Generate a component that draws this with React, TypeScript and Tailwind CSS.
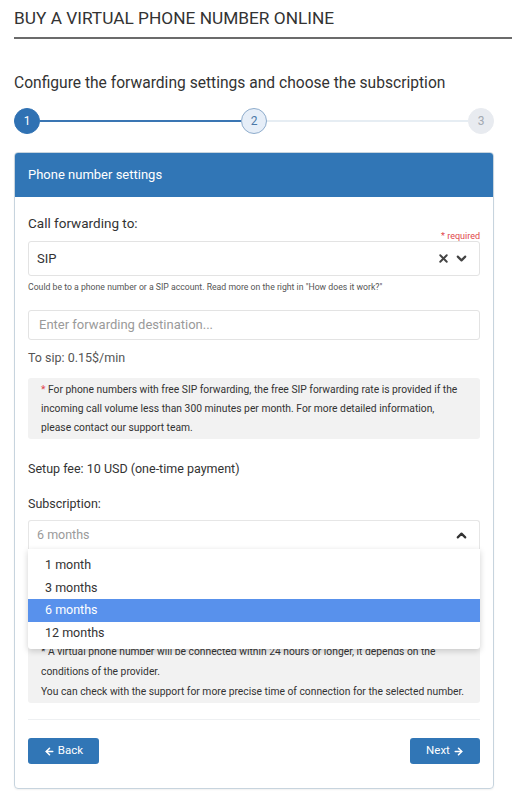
import { ChevronDown, ChevronUp, X, ArrowLeft, ArrowRight } from "lucide-react";

const options = ["1 month", "3 months", "6 months", "12 months"];

function Step({ n, state }: { n: number; state: "done" | "active" | "todo" }) {
  const cls =
    state === "done"
      ? "bg-[#2f71b3] text-white border-[#2f71b3]"
      : state === "active"
      ? "bg-[#e6eef8] text-[#4b78a8] border-[#8eaccc]"
      : "bg-[#e8ebf0] text-[#a3a9b2] border-[#e8ebf0]";
  return (
    <span className={`flex h-[26px] w-[26px] shrink-0 items-center justify-center rounded-full border text-[12px] ${cls}`}>
      {n}
    </span>
  );
}

export default function App() {
  return (
    <div className="min-h-[800px] bg-white pl-[14px] pt-[8px] font-['Roboto',sans-serif] text-[#333]">
      <h1 className="border-b-2 border-[#6b6b6b] pb-[9px] text-[17.3px] leading-[20px] text-[#333]">
        BUY A VIRTUAL PHONE NUMBER ONLINE
      </h1>

      <div className="pr-[18px]">
        <h2 className="mt-[34px] text-[15.6px] leading-[20px] text-[#333]">
          Configure the forwarding settings and choose the subscription
        </h2>

        {/* Stepper */}
        <div className="mt-[15px] flex items-center">
          <Step n={1} state="done" />
          <div className="h-[2px] flex-1 bg-[#3a76b3]" />
          <Step n={2} state="active" />
          <div className="h-[2px] flex-1 bg-[#e6edf3]" />
          <Step n={3} state="todo" />
        </div>

        {/* Card */}
        <div className="mt-[18px] rounded-[4px] border border-[#c7d4de] shadow-[0_1px_2px_rgba(0,0,0,0.06)]">
          <div className="flex h-[44px] items-center rounded-t-[3px] bg-[#3176b6] px-[13px] text-[13px] text-white">
            Phone number settings
          </div>

          <div className="px-[13px] pb-[24px]">
            <div className="mt-[18px] text-[13.5px] leading-[16px] text-[#333]">Call forwarding to:</div>
            <div className="text-right text-[9px] leading-[10px] text-[#e0464b]">* required</div>
            <div className="flex h-[35px] items-center rounded-[3px] border border-[#e3e3e3] pl-[8px] pr-[10px] text-[13px]">
              <span className="flex-1">SIP</span>
              <X className="h-[13px] w-[13px] text-[#444]" strokeWidth={3.5} />
              <ChevronDown className="ml-[4px] h-[15px] w-[15px] text-[#444]" strokeWidth={3.5} />
            </div>
            <p className="mt-[5px] text-[8.7px] leading-[12px] text-[#555]">
              Could be to a phone number or a SIP account. Read more on the right in "How does it work?"
            </p>

            <div className="mt-[17px] flex h-[30px] items-center rounded-[3px] border border-[#e3e3e3] px-[10px] text-[13px] text-[#9a9a9a]">
              Enter forwarding destination...
            </div>

            <div className="mt-[10px] text-[12.5px] leading-[15px] text-[#555]">To sip: 0.15$/min</div>

            <div className="mt-[13px] rounded-[3px] bg-[#f2f2f2] pb-[2px] pl-[13px] pr-[20px] pt-[2px] text-[10.3px] leading-[19px] text-[#333]">
              <span className="text-[#e0464b]">*</span> For phone numbers with free SIP forwarding, the free SIP forwarding rate
              is provided if the incoming call volume less than 300 minutes per month. For more detailed information, please
              contact our support team.
            </div>

            <div className="mt-[22px] text-[12.5px] leading-[15px] text-[#333]">Setup fee: 10 USD (one-time payment)</div>

            <div className="mt-[20px] text-[12.5px] leading-[15px] text-[#333]">Subscription:</div>

            <div className="relative mt-[9px]">
              <div className="flex h-[29px] items-center rounded-t-[3px] border border-b-0 border-[#e6e6e6] pl-[8px] pr-[10px] text-[12.5px] text-[#9a9a9a]">
                <span className="flex-1">6 months</span>
                <ChevronUp className="h-[15px] w-[15px] text-[#333]" strokeWidth={3.5} />
              </div>
              <div className="absolute left-0 right-0 top-[29px] z-10 rounded-b-[3px] bg-white py-[5px] shadow-[0_2px_6px_rgba(0,0,0,0.18)]">
                {options.map((o) => (
                  <div
                    key={o}
                    className={`h-[22.5px] pl-[17px] text-[12.5px] leading-[22.5px] ${
                      o === "6 months" ? "bg-[#5891ec] text-white" : "text-[#333]"
                    }`}
                  >
                    {o}
                  </div>
                ))}
              </div>
            </div>

            <div className="mt-[79px] rounded-[3px] bg-[#f2f2f2] pb-[1px] pl-[13px] pr-[6px] pt-[14px] text-[10.3px] leading-[20px] text-[#333]">
              <div>* A virtual phone number will be connected within 24 hours or longer, it depends on the conditions of the provider.</div>
              <div>You can check with the support for more precise time of connection for the selected number.</div>
            </div>

            <div className="mt-[16px] border-t border-[#eef0f2]" />

            <div className="mt-[18px] flex items-center justify-between">
              <button className="flex h-[26px] w-[71px] items-center justify-center gap-[3px] rounded-[3px] bg-[#3176b6] text-[11.5px] text-white">
                <ArrowLeft className="h-[11px] w-[11px]" strokeWidth={3.5} />
                Back
              </button>
              <button className="flex h-[26px] w-[70px] items-center justify-center gap-[3px] rounded-[3px] bg-[#3176b6] text-[11.5px] text-white">
                Next
                <ArrowRight className="h-[11px] w-[11px]" strokeWidth={3.5} />
              </button>
            </div>
          </div>
        </div>
      </div>
    </div>
  );
}
